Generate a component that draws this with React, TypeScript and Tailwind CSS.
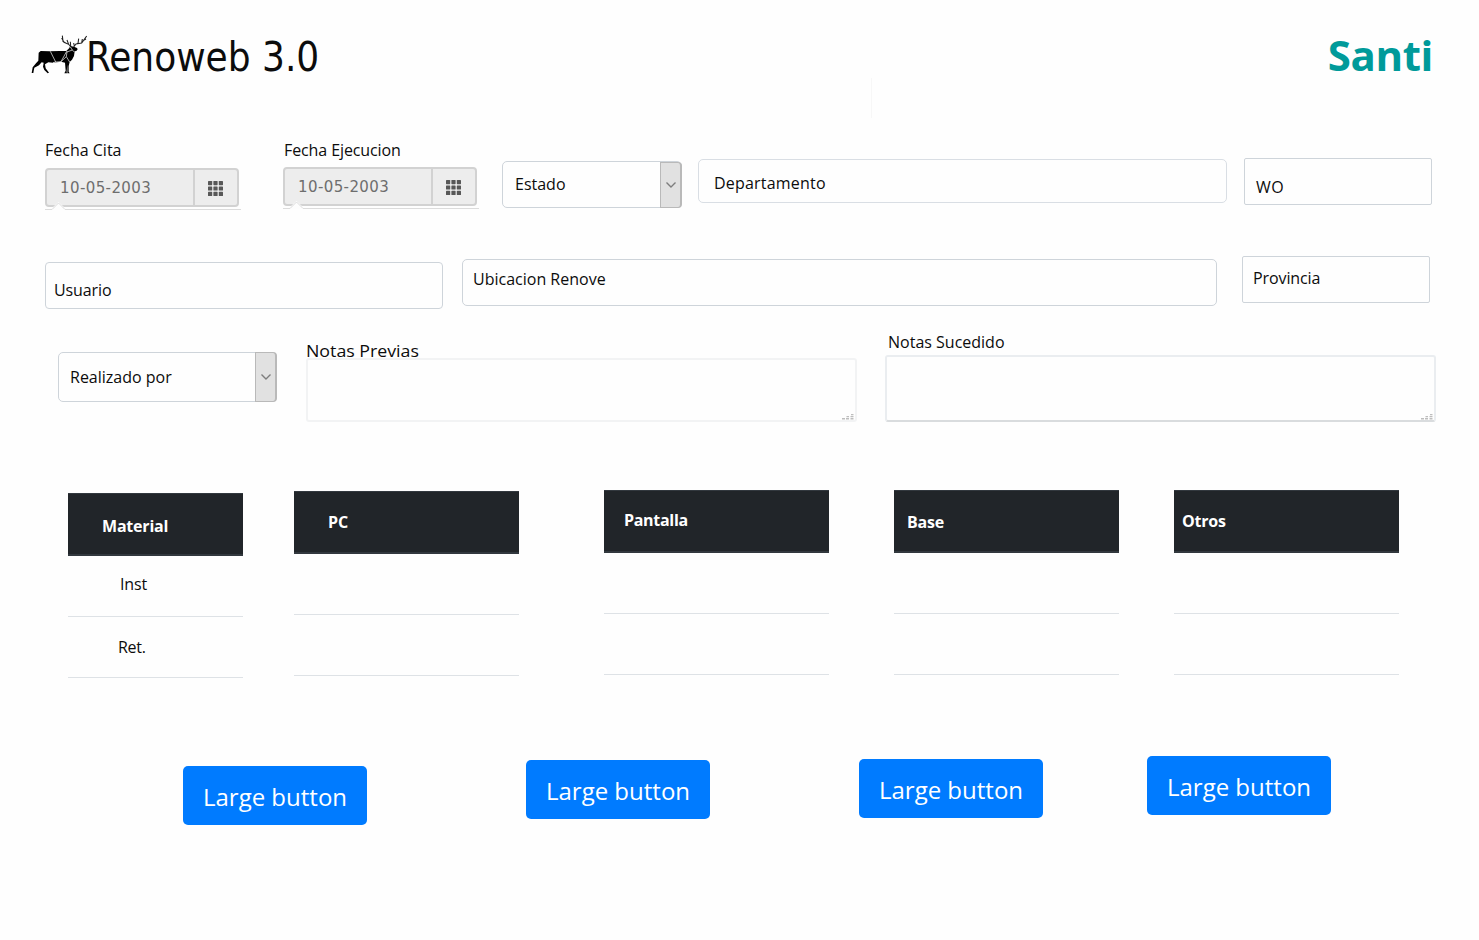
import type { ReactNode } from "react";

function DeerLogo() {
  return (
    <svg viewBox="18 18 168 123" className="mt-[34px] ml-[31px] h-[41px] w-14 shrink-0" aria-hidden="true">
      <path
        d="M41 74 L47 69 L74 70 L104 69 L124 69 L133 60 L135 54 L147 56 L156 60 L158 64 L154 69 L149 70 L147 84 L141 95 L134 102 L131 114 L131 131 L134 136 L127 136 L127 110 L125 131 L126 136 L118 136 L122 128 L120 104 L108 101 L84 104 L70 103 L60 109 L62 121 L72 134 L68 136 L58 126 L54 116 L56 104 L50 103 L42 112 L28 119 L26 129 L25 135 L20 135 L23 118 L33 106 L40 98 Z"
        fill="#000"
      />
      <g fill="none" stroke="#222" strokeWidth="3.2">
        <path d="M140 58 L131 49 L117 43 L110 30 M131 49 L126 36 M121 44 L114 40 L112 23 M137 54 L136 41" />
        <path d="M146 57 L153 48 L170 45 L185 24 M159 47 L161 32 M170 45 L172 33 M176 37 L183 33 M148 54 L146 45" />
      </g>
      <g fill="none" stroke="#fff" strokeWidth="2">
        <path d="M76 70 L92 102 L84 104 M92 102 L108 101 L125 70 M108 101 L124 86 L126 70 M124 86 L134 102 M126 72 L142 66 L136 57 M142 66 L148 72" />
      </g>
    </svg>
  );
}

function GridIcon() {
  return (
    <svg viewBox="0 0 15 15" className="h-[15px] w-[15px]" fill="#585858" aria-hidden="true">
      {[0, 5.4, 10.8].map((y) =>
        [0, 5.4, 10.8].map((x) => <rect key={`${x}-${y}`} x={x} y={y} width="4.2" height="4.2" rx="0.6" />),
      )}
    </svg>
  );
}

function DateField({ label, className, labelClass }: { label: string; className: string; labelClass: string }) {
  return (
    <div className={`w-[196px] shrink-0 ${className}`}>
      <div className={`h-6 leading-6 whitespace-nowrap ${labelClass}`}>{label}</div>
      <div className="flex h-[39px] w-[194px] rounded-[4px] border-2 border-[#d2d2d2] bg-[#ededed]">
        <div className="flex w-[148px] items-center border-r-2 border-[#d2d2d2] pl-[13px] font-['DejaVu_Sans'] text-[15px] tracking-[0.4px] text-[#6e6e6e]">
          10-05-2003
        </div>
        <div className="flex flex-1 items-center justify-center pt-px pr-px">
          <GridIcon />
        </div>
      </div>
      <svg viewBox="0 0 196 8" className="-mt-[5px] block h-2 w-[196px]" aria-hidden="true">
        <path d="M5 8 L13.500 0 L22 8Z" fill="#fdfdfd" />
        <path d="M0 7.500 H7 L13.500 1 L20 7.500 H196" fill="none" stroke="#dcdcdc" />
      </svg>
    </div>
  );
}

function SelectField({ label, className }: { label: string; className: string }) {
  return (
    <div className={`flex shrink-0 rounded-[5px] border border-[#ced4da] ${className}`}>
      <span className="flex-1 whitespace-nowrap">{label}</span>
      <span className="-my-px -mr-px flex items-center justify-center rounded-r-[4px] border border-r-2 border-[#b9b9b9] bg-[#e1e1e1] group-last:w-6 w-[22px]">
        <svg viewBox="0 0 12 8" className="h-2 w-3" fill="none" stroke="#7d7d7d" strokeWidth="1.4" aria-hidden="true">
          <path d="M1.500 1.500 L6 6 L10.500 1.500" />
        </svg>
      </span>
    </div>
  );
}

function Field({ children, className }: { children: ReactNode; className: string }) {
  return <div className={`shrink-0 border whitespace-nowrap ${className}`}>{children}</div>;
}

function NotesArea({ className }: { className: string }) {
  return (
    <div className={`flex w-[551px] items-end justify-end rounded-[3px] border-2 ${className}`}>
      <svg viewBox="0 0 12 6" className="mr-px h-1.5 w-3" fill="#bdbdbd" aria-hidden="true">
        <path d="M0 4h3v1.500H0zM4 4h3v1.500H4zM8.500 4h3v1.500h-3zM4.500 2h2.500v1.200h-2.500zM8.500 2h3v1.200h-3zM9 0h2.500v1.200H9z" />
      </svg>
    </div>
  );
}

function MaterialTable({
  title,
  rows,
  className,
  titleClass,
}: {
  title: string;
  rows: [string, string];
  className: string;
  titleClass: string;
}) {
  return (
    <div className={`shrink-0 ${className}`}>
      <div className={`h-[63px] border-t border-b-2 border-[#32383e] bg-[#212529] leading-6 font-bold text-white ${titleClass}`}>
        {title}
      </div>
      <div className="h-[61px] border-b border-[#dee2e6] pt-4 pl-[52px] leading-6 tracking-[-0.1px]">{rows[0]}</div>
      <div className="h-[61px] border-b border-[#dee2e6] pt-[18px] pl-[50px] leading-6 tracking-[-0.3px]">{rows[1]}</div>
    </div>
  );
}

function LargeButton({ className }: { className: string }) {
  return (
    <button
      className={`h-[59px] w-[184px] shrink-0 rounded-[5px] bg-[#007bff] pt-[3px] text-[24px] leading-9 whitespace-nowrap text-white ${className}`}
    >
      Large button
    </button>
  );
}

export default function App() {
  return (
    <main className="h-[940px] w-[1479px] overflow-hidden bg-[#fefefe] font-['Open_Sans','Noto_Sans',sans-serif] text-[16px] leading-6 text-[#0c0c0c]">
      <header className="flex h-[130px] items-start">
        <DeerLogo />
        <h1 className="mt-[33px] -ml-px font-['DejaVu_Sans_Condensed','DejaVu_Sans',sans-serif] text-[40px] leading-[48px] whitespace-nowrap">
          Renoweb 3.0
        </h1>
        <div className="mt-[78px] ml-[552px] h-10 w-px bg-[#f7f7f7]" />
        <div className="mt-[31px] mr-[46px] ml-auto text-[42px] leading-[48px] font-bold tracking-[-0.4px] text-[#009a9a]">Santi</div>
      </header>

      <section className="flex h-[126px] items-start">
        <DateField label="Fecha Cita" className="mt-2 ml-[45px]" labelClass="mb-1.5" />
        <DateField label="Fecha Ejecucion" className="mt-2 ml-[42px]" labelClass="mb-[5px] pl-px tracking-[-0.1px]" />
        <SelectField label="Estado" className="mt-[31px] ml-[23px] h-[47px] w-[180px] pt-px pl-3 leading-[42px]" />
        <Field className="mt-[29px] ml-4 h-[44px] w-[529px] rounded-[5px] border-[#d9dee4] pt-[11px] pl-[15px] tracking-[0.2px]">
          Departamento
        </Field>
        <Field className="mt-[28px] ml-[17px] h-[47px] w-[188px] rounded-[2px] border-[#ced4da] pt-4 pl-[11px] tracking-[0.4px]">
          WO
        </Field>
      </section>

      <section className="flex h-[74px] items-start">
        <Field className="mt-1.5 ml-[45px] h-[47px] w-[398px] rounded-[4px] border-[#ced4da] pt-[15px] pl-2 tracking-[-0.1px]">
          Usuario
        </Field>
        <Field className="mt-[3px] ml-[19px] h-[47px] w-[755px] rounded-[5px] border-[#ced4da] pt-[7px] pl-[10px]">
          Ubicacion Renove
        </Field>
        <Field className="ml-[25px] h-[47px] w-[188px] rounded-[2px] border-[#ced4da] pt-[9px] pl-[10px] tracking-[-0.1px]">
          Provincia
        </Field>
      </section>

      <section className="flex h-[160px] items-start">
        <SelectField label="Realizado por" className="mt-[22px] ml-[58px] h-[50px] w-[219px] pl-[11px] leading-[48px]" />
        <div className="mt-[9px] ml-[29px] flex flex-col">
          <div className="h-[19px] origin-left scale-x-[1.11] whitespace-nowrap">Notas Previas</div>
          <NotesArea className="h-16 border-[#f2f3f4]" />
        </div>
        <div className="ml-7 flex flex-col">
          <div className="h-[25px] pl-[3px] whitespace-nowrap">Notas Sucedido</div>
          <NotesArea className="h-[67px] border-[#eaedf0] border-b-[#d9dcde]" />
        </div>
      </section>

      <section className="flex h-[266px] items-start">
        <MaterialTable title="Material" rows={["Inst", "Ret."]} className="mt-[3px] ml-[68px] w-[175px]" titleClass="pt-5 pl-[34px] tracking-[-0.2px]" />
        <MaterialTable title="PC" rows={["", ""]} className="mt-px ml-[51px] w-[225px]" titleClass="pt-[18px] pl-[34px]" />
        <MaterialTable title="Pantalla" rows={["", ""]} className="ml-[85px] w-[225px]" titleClass="pt-[17px] pl-5 tracking-[-0.3px]" />
        <MaterialTable title="Base" rows={["", ""]} className="ml-[65px] w-[225px]" titleClass="pt-[19px] pl-[13px] tracking-[-0.2px]" />
        <MaterialTable title="Otros" rows={["", ""]} className="ml-[55px] w-[225px]" titleClass="pt-[18px] pl-2 tracking-[-0.2px]" />
      </section>

      <footer className="flex items-start">
        <LargeButton className="mt-[10px] ml-[183px]" />
        <LargeButton className="mt-1 ml-[159px]" />
        <LargeButton className="mt-[3px] ml-[149px]" />
        <LargeButton className="ml-[104px]" />
      </footer>
    </main>
  );
}
